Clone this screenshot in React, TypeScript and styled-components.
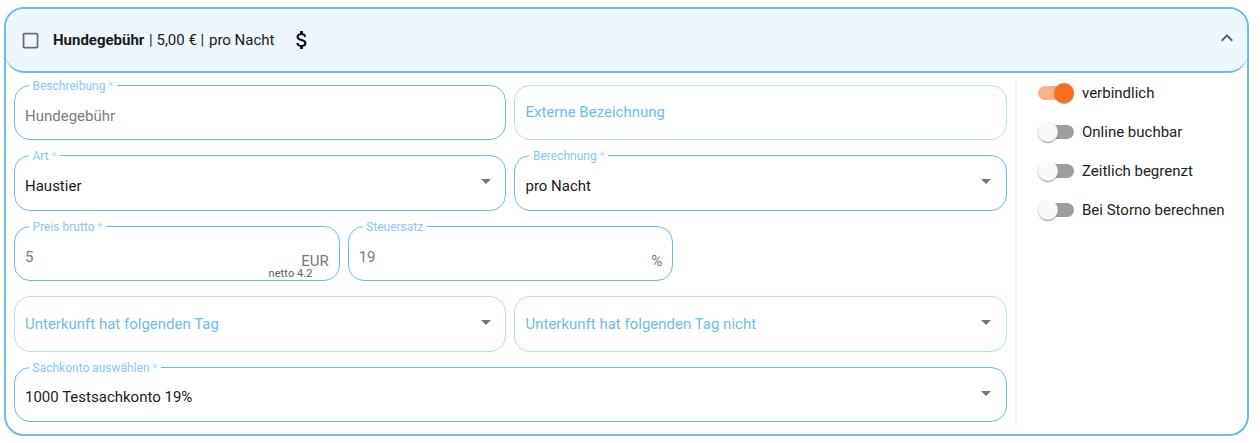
import styled, {createGlobalStyle} from 'styled-components'

const GlobalStyle = createGlobalStyle`
    html, body {
        margin: 0;
        padding: 0;
        background: #ffffff;
        font-family: Roboto, "Liberation Sans", sans-serif;
    }
`
const Page = styled.div`
    padding: 7px 11px 7px 4px;
`
const Card = styled.div`
    border: 2px solid #70bce8;
    border-radius: 20px;
    height: 429px;
    box-sizing: border-box;
    display: flex;
    flex-direction: column;
    overflow: hidden;
`
const Header = styled.div`
    height: 64px;
    flex: none;
    box-sizing: border-box;
    margin: 0 -1px;
    padding-left: 14.5px;
    padding-right: 9px;
    background: #eef6fe;
    border-bottom: 2px solid #70bce8;
    border-radius: 0 0 20px 20px;
    display: flex;
    align-items: center;
    color: #1a1a1a;
`
const HeaderText = styled.div`
    margin-left: 12.5px;
    font-size: 15px;
    b {
        font-weight: 700;
        margin-right: 1px;
    }
`
const Sep = styled.span`
    margin-right: 1px;
`
const Money = styled.svg`
    width: 24px;
    height: 24px;
    margin-left: 15px;
    fill: #111111;
`
const Collapse = styled.svg`
    width: 24px;
    height: 24px;
    margin-left: auto;
    margin-top: -5px;
    fill: #616161;
`
const Check = styled.svg`
    width: 21px;
    height: 21px;
    fill: #6e6e6e;
`
const Body = styled.div`
    flex: 1;
    display: flex;
    padding: 11.75px 0 0 8px;
    min-height: 0;
`
const Form = styled.div`
    width: 993px;
    display: grid;
    grid-template-columns: repeat(12, 1fr);
    grid-auto-rows: 55.25px;
    column-gap: 8px;
    row-gap: 15.25px;
`
const Slot = styled.div<{$span: number}>`
    grid-column: span ${(p) => p.$span};
`
const Box = styled.fieldset<{$light?: boolean}>`
    position: relative;
    margin: 0;
    height: 100%;
    box-sizing: border-box;
    padding: 0 10px;
    border: 1px solid ${(p) => (p.$light ? '#b5dcf3' : '#70bce8')};
    border-radius: 16px;
    min-width: 0;
    display: flex;
    align-items: center;
`
const Legend = styled.legend`
    margin-left: 4px;
    padding: 0 3.5px;
    font-size: 12px;
    line-height: 1;
    color: #88c8ee;
    height: 1px;
    position: relative;
    top: -5px;
`
const Star = styled.span`
    color: #b9dff5;
`
const Value = styled.div<{$tone: 'dark' | 'gray' | 'blue'; $shift?: number}>`
    font-size: 15px;
    position: relative;
    top: ${(p) => p.$shift ?? 0}px;
    color: ${(p) => (p.$tone === 'dark' ? '#1b1b1b' : p.$tone === 'gray' ? '#7c7c7c' : '#73bbe7')};
`
const Arrow = styled.svg`
    position: absolute;
    right: 7.5px;
    top: 13px;
    width: 24px;
    height: 24px;
    fill: #757575;
`
const Suffix = styled.span`
    position: absolute;
    right: 10px;
    bottom: 11px;
    font-size: 15px;
    line-height: 1;
    color: #7c7672;
`
const Netto = styled.span`
    position: absolute;
    right: 26px;
    bottom: 0;
    font-size: 11px;
    letter-spacing: 0.1px;
    line-height: 12px;
    color: #5f5f5f;
`
const Side = styled.div`
    margin-left: 8px;
    margin-top: -6px;
    margin-bottom: 8px;
    flex: 1;
    border-left: 2px solid #eff5fb;
    padding: 3px 0 0 21px;
    display: flex;
    flex-direction: column;
    gap: 17px;
`
const SwitchRow = styled.div`
    height: 22px;
    display: flex;
    align-items: center;
    gap: 8px;
    font-size: 15px;
    color: #222222;
`
const Track = styled.div<{$on?: boolean}>`
    position: relative;
    width: 36px;
    height: 14px;
    border-radius: 7px;
    background: ${(p) => (p.$on ? '#fbb088' : '#9e9e9e')};
`
const Thumb = styled.div<{$on?: boolean}>`
    position: absolute;
    top: -3px;
    left: ${(p) => (p.$on ? '16px' : '0')};
    width: 20px;
    height: 20px;
    border-radius: 50%;
    background: ${(p) => (p.$on ? '#f77022' : '#fafafa')};
    box-shadow: 0 2px 1px -1px rgba(0, 0, 0, 0.2), 0 1px 1px rgba(0, 0, 0, 0.14), 0 1px 3px rgba(0, 0, 0, 0.12);
`

function Field(props: {
    span: number
    label?: string
    required?: boolean
    value: string
    tone: 'dark' | 'gray' | 'blue'
    select?: boolean
    suffix?: string
    netto?: string
    shift?: number
}) {
    return (
        <Slot $span={props.span}>
            <Box $light={!props.label}>
                {props.label && (
                    <Legend>
                        {props.label}
                        {props.required && <Star> *</Star>}
                    </Legend>
                )}
                <Value $tone={props.tone} $shift={props.shift}>
                    {props.value}
                </Value>
                {props.select && (
                    <Arrow viewBox="0 0 24 24">
                        <path d="M7 10l5 5 5-5z" />
                    </Arrow>
                )}
                {props.suffix && <Suffix>{props.suffix}</Suffix>}
                {props.netto && <Netto>{props.netto}</Netto>}
            </Box>
        </Slot>
    )
}

function Toggle({label, on}: {label: string; on?: boolean}) {
    return (
        <SwitchRow>
            <Track $on={on}>
                <Thumb $on={on} />
            </Track>
            {label}
        </SwitchRow>
    )
}

export default function App() {
    return (
        <Page>
            <GlobalStyle />
            <Card>
                <Header>
                    <Check viewBox="0 0 24 24">
                        <path d="M19 5v14H5V5h14m0-2H5c-1.1 0-2 .9-2 2v14c0 1.1.9 2 2 2h14c1.1 0 2-.9 2-2V5c0-1.1-.9-2-2-2z" />
                    </Check>
                    <HeaderText>
                        <b>Hundegebühr</b> | 5,00 € <Sep>|</Sep> pro Nacht
                    </HeaderText>
                    <Money viewBox="0 0 24 24">
                        <path d="M11.8 10.9c-2.27-.59-3-1.2-3-2.15 0-1.09 1.01-1.85 2.7-1.85 1.78 0 2.44.85 2.5 2.1h2.21c-.07-1.72-1.12-3.3-3.21-3.81V3h-3v2.16c-1.94.42-3.5 1.68-3.5 3.61 0 2.31 1.91 3.46 4.7 4.13 2.5.6 3 1.48 3 2.41 0 .69-.49 1.79-2.7 1.79-2.06 0-2.87-.92-2.98-2.1h-2.2c.12 2.19 1.76 3.42 3.68 3.83V21h3v-2.15c1.95-.37 3.5-1.5 3.5-3.55 0-2.84-2.43-3.81-4.7-4.4z" />
                    </Money>
                    <Collapse viewBox="0 0 24 24">
                        <path d="M12 8l-6 6 1.41 1.41L12 10.83l4.59 4.58L18 14z" />
                    </Collapse>
                </Header>
                <Body>
                    <Form>
                        <Field span={6} label="Beschreibung" required value="Hundegebühr" tone="gray" shift={4} />
                        <Field span={6} value="Externe Bezeichnung" tone="blue" />
                        <Field span={6} label="Art" required value="Haustier" tone="dark" select shift={3} />
                        <Field span={6} label="Berechnung" required value="pro Nacht" tone="dark" select shift={3} />
                        <Field span={4} label="Preis brutto" required value="5" tone="gray" suffix="EUR" netto="netto 4.2" shift={4} />
                        <Field span={4} label="Steuersatz" value="19" tone="gray" suffix="%" shift={4} />
                        <Slot $span={4} />
                        <Field span={6} value="Unterkunft hat folgenden Tag" tone="blue" select />
                        <Field span={6} value="Unterkunft hat folgenden Tag nicht" tone="blue" select />
                        <Field span={12} label="Sachkonto auswählen" required value="1000 Testsachkonto 19%" tone="dark" select shift={3} />
                    </Form>
                    <Side>
                        <Toggle label="verbindlich" on />
                        <Toggle label="Online buchbar" />
                        <Toggle label="Zeitlich begrenzt" />
                        <Toggle label="Bei Storno berechnen" />
                    </Side>
                </Body>
            </Card>
        </Page>
    )
}
